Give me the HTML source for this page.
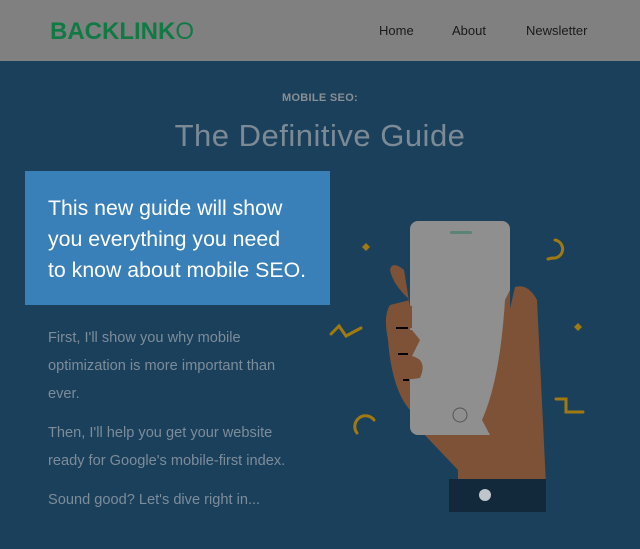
<!DOCTYPE html>
<html><head><style>
*{margin:0;padding:0;box-sizing:border-box}
body{width:640px;height:549px;overflow:hidden;background:#1b405c;font-family:"Liberation Sans",sans-serif;position:relative}
.hdr{position:absolute;left:0;top:0;width:640px;height:61px;background:#808080}
.logo{position:absolute;left:50px;top:18px;font-weight:bold;font-size:24px;color:#0f7a44;letter-spacing:0px}
.nav{position:absolute;top:23px;font-size:13px;color:#1a1a1a}
.kick{position:absolute;top:92px;width:640px;text-align:center;font-weight:bold;font-size:11px;color:#8a8f94;letter-spacing:0.3px}
.title{position:absolute;top:118px;width:640px;text-align:center;font-size:31px;color:#7c8a96;font-weight:300;letter-spacing:0.5px}
.box{position:absolute;left:25px;top:171px;width:305px;height:134px;background:#3a80b8;color:#fff;font-size:21.3px;line-height:31px;padding:22px 0 0 23px;white-space:nowrap}
.p{position:absolute;left:48px;font-size:14.6px;color:#7d8c99;line-height:28px;white-space:nowrap}
</style></head><body>
<div class="hdr"></div>
<div class="logo">BACKLINK<span style="font-weight:normal">O</span></div>
<div class="nav" style="left:379px">Home</div>
<div class="nav" style="left:452px">About</div>
<div class="nav" style="left:526px">Newsletter</div>
<div class="kick">MOBILE SEO:</div>
<div class="title">The Definitive Guide</div>
<div class="box">This new guide will show<br>you everything you need<br>to know about mobile SEO.</div>
<div class="p" style="top:324px">First, I'll show you why mobile<br>optimization is more important than<br>ever.</div>
<div class="p" style="top:419px">Then, I'll help you get your website<br>ready for Google's mobile-first index.</div>
<div class="p" style="top:486px">Sound good? Let's dive right in...</div>
<svg style="position:absolute;left:0;top:0" width="640" height="549">
<g fill="none" stroke="#a07a10" stroke-width="3" stroke-linecap="round">
<path d="M331 334 L339 326 L346 336 L361 328"/>
<path d="M555 240 A8 8 0 0 1 552 258 L548 259"/>
<path d="M374 420 A9 9 0 0 0 357 433"/>
<path d="M556 399 L566 399 L566 412 L583 412"/>
</g>
<path d="M366 243 l4 4 l-4 4 l-4 -4z M578 323 l4 4 l-4 4 l-4 -4z" fill="#a07a10"/>
<path d="M404 270 Q392 260 390 270 Q393 285 410 300 L390 305 Q383 315 388 340 Q392 390 410 410 L420 430 L458 470 L458 485 L546 485 L537 300 Q528 283 515 287 L505 330 L498 380 L480 430 L430 430 Z" fill="#7d5237"/>
<rect x="449" y="479" width="97" height="33" fill="#11293b"/>
<circle cx="485" cy="495" r="6" fill="#bfc5ca"/>
<rect x="410" y="221" width="100" height="214" rx="8" fill="#8f8f8f"/>
<rect x="450" y="231" width="22" height="3" rx="1.5" fill="#5b8474"/>
<circle cx="460" cy="415" r="7" fill="none" stroke="#555" stroke-width="1"/>
<path d="M505 300 Q500 380 482 420 L490 435 L510 435 L510 290Z" fill="#7d5237"/>
<path d="M388 310 Q382 330 395 330 L412 328 L412 306 Q395 302 388 310Z M395 330 L412 330 L420 340 L412 356 L397 356Z M400 356 L412 356 Q428 360 420 378 L405 380Z" fill="#7d5237"/>
<path d="M396 328 h12 M398 354 h10 M403 380 h6" stroke="#000" stroke-width="2"/>
</svg>
</body></html>
